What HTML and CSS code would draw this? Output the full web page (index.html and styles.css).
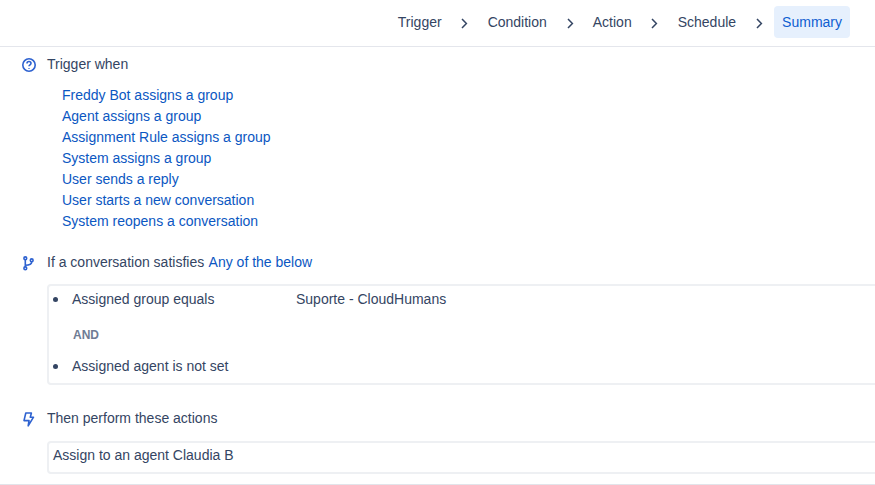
FILE: index.html
```html
<!DOCTYPE html>
<html lang="en">
<head>
<meta charset="utf-8">
<title>Summary</title>
<link rel="stylesheet" href="styles.css">
</head>
<body>
<div class="page">
  <header class="steps">
    <span class="step">Trigger</span>
    <svg class="chev" viewBox="0 0 16 16"><path d="M5 4l4.4 4.5L5 13"/></svg>
    <span class="step">Condition</span>
    <svg class="chev" viewBox="0 0 16 16"><path d="M6 4l4.4 4.5L6 13"/></svg>
    <span class="step">Action</span>
    <svg class="chev" viewBox="0 0 16 16"><path d="M5 4l4.4 4.5L5 13"/></svg>
    <span class="step">Schedule</span>
    <svg class="chev" viewBox="0 0 16 16"><path d="M6 4l4.4 4.5L6 13"/></svg>
    <span class="step active">Summary</span>
  </header>
  <main class="content">
    <section class="trigger">
      <div class="title">
        <svg class="icon" viewBox="0 0 16 16"><circle cx="8" cy="8" r="6.2"/><path d="M6 6.4c0-1.2 1-1.9 2-1.9s2 .7 2 1.8c0 1.5-2 1.5-2 2.9"/><path class="dot" d="M8 10.9v.9"/></svg>
        <span>Trigger when</span>
      </div>
      <ul class="links">
        <li>Freddy Bot assigns a group</li>
        <li>Agent assigns a group</li>
        <li>Assignment Rule assigns a group</li>
        <li>System assigns a group</li>
        <li>User sends a reply</li>
        <li>User starts a new conversation</li>
        <li>System reopens a conversation</li>
      </ul>
    </section>
    <section class="condition">
      <div class="title">
        <svg class="icon" viewBox="0 0 16 16"><circle cx="4.3" cy="3.3" r="1.4"/><circle cx="4.3" cy="13.3" r="1.4"/><circle cx="10.7" cy="5.3" r="1.4"/><path d="M4.3 4.7v7.2M4.3 10.2c3.6 0 6.4-.6 6.4-3.5"/></svg>
        <span>If a conversation satisfies <span class="link">Any of the below</span></span>
      </div>
      <div class="box conds">
        <ul class="cond-list">
          <li><span class="field">Assigned group equals</span><span>Suporte - CloudHumans</span></li>
        </ul>
        <div class="and">AND</div>
        <ul class="cond-list">
          <li>Assigned agent is not set</li>
        </ul>
      </div>
    </section>
    <section class="actions">
      <div class="title">
        <svg class="icon" viewBox="0 0 16 16"><path d="M4.8 2h5.6L9.3 6.2h3.2L7.2 14.8 8 9.6H3z"/></svg>
        <span>Then perform these actions</span>
      </div>
      <div class="box action">Assign to an agent Claudia B</div>
    </section>
  </main>
</div>
</body>
</html>
```
FILE: styles.css
```css
html, body {
  margin: 0;
  padding: 0;
  background: #fff;
}
body {
  font-family: "Liberation Sans", Arial, sans-serif;
  font-size: 14px;
  line-height: 21px;
  color: #344563;
  overflow: hidden;
}
.page {
  width: 875px;
  height: 485px;
  overflow: hidden;
  box-sizing: border-box;
  border-bottom: 1px solid #e2e4ea;
}
.steps {
  display: flex;
  justify-content: flex-end;
  align-items: flex-start;
  height: 40px;
  padding: 6px 25px 0 0;
  border-bottom: 1px solid #e4e6ec;
}
.step {
  padding: 0 8px;
  height: 32px;
  line-height: 32px;
  border-radius: 4px;
}
.step.active {
  background: #e6f0fd;
  color: #0f5ed1;
}
.chev {
  width: 16px;
  height: 16px;
  margin: 9px 7px 0;
  fill: none;
  stroke: #344563;
  stroke-width: 1.5;
}
.content {
  padding: 7px 0 0 21px;
}
.title {
  display: flex;
  align-items: center;
  gap: 10px;
  height: 21px;
}
.icon {
  width: 16px;
  height: 16px;
  flex: none;
  fill: none;
  stroke: #2e62d0;
  stroke-width: 1.6;
  stroke-linejoin: round;
}
.link, .links {
  color: #0b57c2;
}
.link {
  margin-left: 0.5px;
}
.links {
  list-style: none;
  margin: 10px 0 0;
  padding: 0 0 0 41px;
}
.condition {
  margin-top: 20px;
}
.box {
  width: 860px;
  margin-left: 26px;
  box-sizing: border-box;
  border: 2px solid #eef0f3;
  border-radius: 4px;
}
.conds {
  margin-top: 11px;
  height: 101px;
  padding-top: 2px;
}
.cond-list {
  margin: 0;
  padding: 0 0 0 20px;
}
.cond-list li {
  padding-left: 3px;
  height: 21px;
}
.cond-list li::marker {
  font-size: 15px;
}
.field {
  display: inline-block;
  width: 224px;
}
.and {
  margin: 16px 0 9px 24px;
  font-size: 12px;
  font-weight: bold;
  color: #6f7c94;
}
.actions {
  margin-top: 23px;
}
.action {
  margin-top: 12px;
  height: 33px;
  padding: 2px 4px;
}
```
